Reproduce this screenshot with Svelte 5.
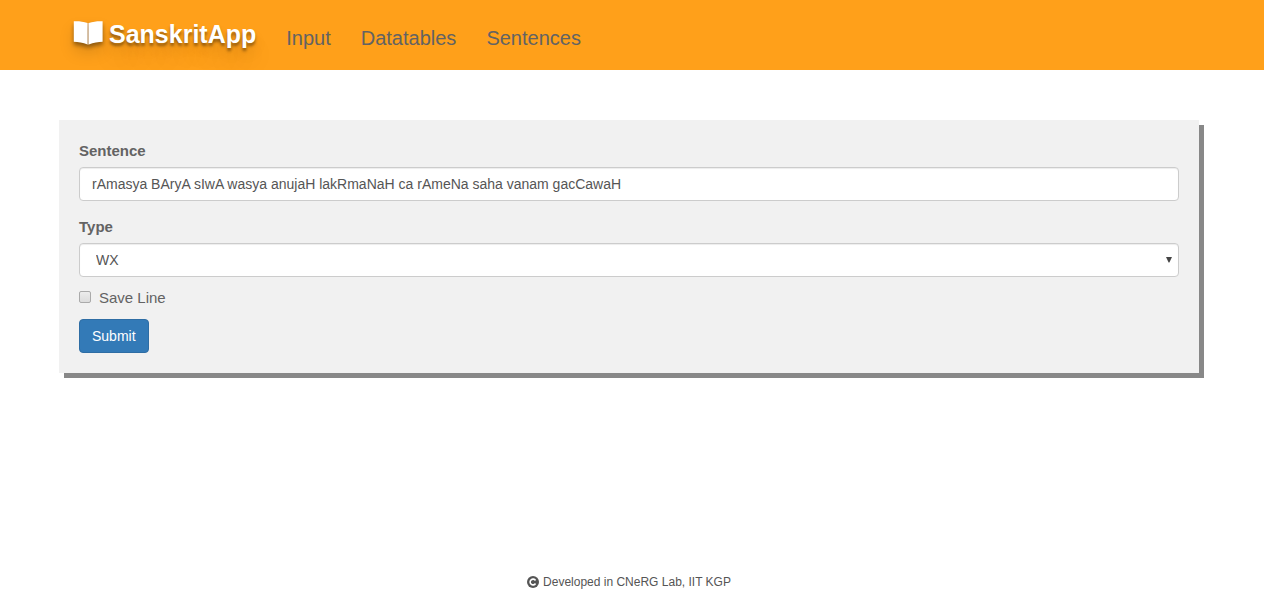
<script>
  let sentence = $state('rAmasya BAryA sIwA wasya anujaH lakRmaNaH ca rAmeNa saha vanam gacCawaH');
  let type = $state('WX');
  let saveLine = $state(false);
  const links = ['Input', 'Datatables', 'Sentences'];
</script>

<div class="page">
  <header>
    <nav class="container">
      <a class="brand" href="#home">
        <svg width="30" height="26" viewBox="0 0 30 26" aria-hidden="true">
          <path d="M0.8 1.2C5 1 10 1.2 14.6 3V24.6C10 22.7 5 21.8 0.8 21.8Z M29.6 1.2C25.4 1 20.4 1.2 15.8 3V24.6C20.4 22.7 25.4 21.8 29.6 21.8Z" fill="#fff" />
          <path d="M14.6 3H15.8V24.6H14.6Z" fill="#dcc9b8" />
        </svg>
        <span>SanskritApp</span>
      </a>
      {#each links as link}
        <a class="link" href={'#' + link.toLowerCase()}>{link}</a>
      {/each}
    </nav>
  </header>

  <main class="container">
    <form onsubmit={(e) => e.preventDefault()}>
      <div class="group">
        <label for="sentence">Sentence</label>
        <input class="control" id="sentence" type="text" bind:value={sentence} />
      </div>
      <div class="group">
        <label for="type">Type</label>
        <div class="select">
          <select class="control" id="type" bind:value={type}>
            <option>WX</option>
            <option>SLP1</option>
            <option>Devanagari</option>
          </select>
          <svg class="arrow" width="6" height="6" viewBox="0 0 6 6" aria-hidden="true">
            <path d="M0 0H6L3.4 5.6H2.6Z" fill="#444" />
          </svg>
        </div>
      </div>
      <label class="check">
        <input type="checkbox" bind:checked={saveLine} />
        <span>Save Line</span>
      </label>
      <button type="submit">Submit</button>
    </form>
  </main>

  <footer>
    <svg width="12" height="12" viewBox="0 0 12 12" aria-hidden="true">
      <circle cx="6" cy="6" r="6" fill="#555" />
      <path d="M8.5 4.5A2.9 2.9 0 1 0 8.5 7.5" fill="none" stroke="#fff" stroke-width="1.6" />
    </svg>
    <span>Developed in CNeRG Lab, IIT KGP</span>
  </footer>
</div>

<style>
  :global(body) {
    margin: 0;
    background: #fff;
  }
  .page {
    min-height: 100vh;
    display: flex;
    flex-direction: column;
    box-sizing: border-box;
    font-family: "Liberation Sans", Arial, sans-serif;
    font-size: 15px;
    line-height: 22px;
    color: #636363;
  }
  header {
    background: #ffa01a;
    padding-right: 6px;
    overflow: hidden;
  }
  .container {
    width: 100%;
    max-width: 1170px;
    margin: 0 auto;
    padding: 0 15px;
    box-sizing: border-box;
  }
  nav {
    display: flex;
    align-items: center;
    min-height: 70px;
  }
  a {
    text-decoration: none;
  }
  .brand {
    display: flex;
    align-items: center;
    gap: 6px;
    padding: 0 15px 2px 14px;
    font-size: 25px;
    font-weight: bold;
    line-height: 68px;
    color: #fff;
    text-shadow: 0 3px 3px rgba(0, 0, 0, 0.4), 0 8px 13px rgba(0, 0, 0, 0.1), 0 18px 23px rgba(0, 0, 0, 0.1);
  }
  .brand svg {
    margin-bottom: 2px;
    overflow: visible;
    filter: drop-shadow(0 3px 2px rgba(0, 0, 0, 0.4)) drop-shadow(0 8px 7px rgba(0, 0, 0, 0.12));
  }
  .link {
    padding: 6px 15px 0;
    font-size: 20px;
    color: #636363;
  }
  main {
    flex: 1;
  }
  main.container {
    max-width: 1176px;
    padding-right: 21px;
  }
  form {
    margin-top: 50px;
    padding: 20px;
    background: #f1f1f1;
    box-shadow: 5px 5px #888;
  }
  .group {
    margin-bottom: 15px;
  }
  .group + .group {
    margin-bottom: 10px;
  }
  .group label {
    display: block;
    margin-bottom: 5px;
    font-weight: bold;
  }
  .control {
    display: block;
    width: 100%;
    height: 34px;
    box-sizing: border-box;
    padding: 6px 12px;
    border: 1px solid #ccc;
    border-radius: 4px;
    background: #fff;
    box-shadow: inset 0 1px 1px rgba(0, 0, 0, 0.075);
    font: 14px/20px "Liberation Sans", Arial, sans-serif;
    color: #555;
  }
  .select {
    position: relative;
  }
  select.control {
    appearance: none;
    padding: 6px 16px;
  }
  .arrow {
    position: absolute;
    right: 7px;
    top: 14px;
    pointer-events: none;
  }
  .check {
    display: flex;
    align-items: center;
    gap: 8px;
    width: fit-content;
    margin-bottom: 10px;
  }
  .check input {
    appearance: none;
    width: 12px;
    height: 12px;
    box-sizing: border-box;
    margin: 0 0 2px;
    border: 1px solid #aaa;
    border-radius: 2px;
    background: linear-gradient(#ececec, #dcdcdc);
  }
  .check input:checked {
    background: #337ab7;
  }
  button {
    display: block;
    height: 34px;
    padding: 6px 12px;
    border: 1px solid #2e6da4;
    border-radius: 4px;
    background: #337ab7;
    color: #fff;
    font: 14px/20px "Liberation Sans", Arial, sans-serif;
    cursor: pointer;
  }
  footer {
    display: flex;
    justify-content: center;
    align-items: center;
    gap: 4px;
    padding: 0 6px 8px 0;
    font-size: 12px;
    color: #555;
  }
</style>
